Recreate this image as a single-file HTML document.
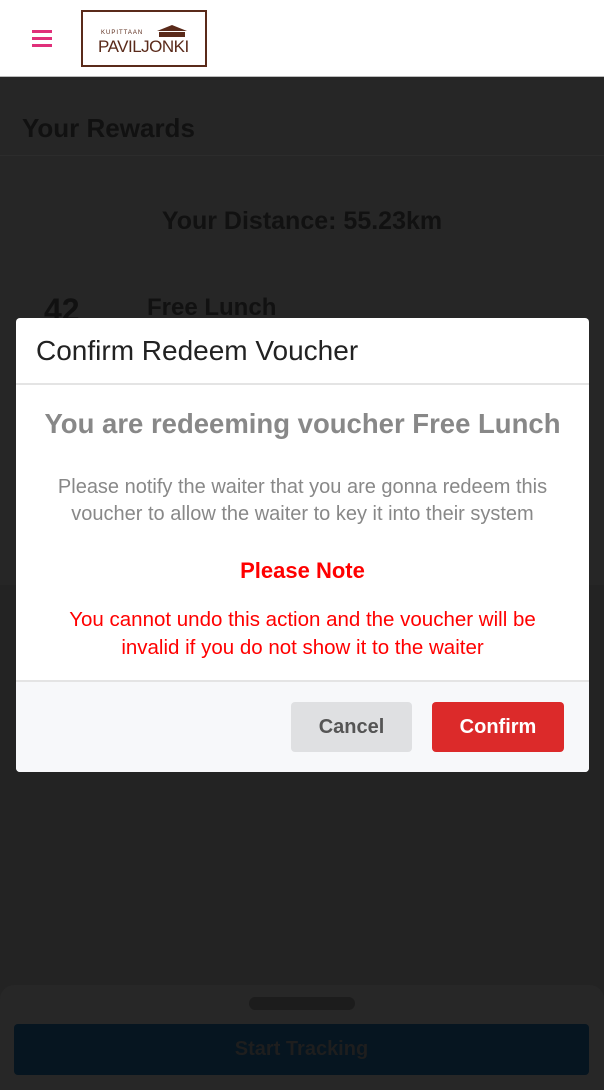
<!DOCTYPE html>
<html><head><meta charset="utf-8"><style>
body{margin:0;width:604px;height:1090px;position:relative;overflow:hidden;background:#232323;font-family:"Liberation Sans",sans-serif}
.abs{position:absolute}
</style></head><body>
<div class="abs" style="left:0;top:0;width:604px;height:76px;background:#fff;border-bottom:1px solid #bbb"></div>
<div class="abs" style="left:32px;top:30px;width:20px;height:3px;background:#e0307a;box-shadow:0 7px 0 #e0307a,0 14px 0 #e0307a"></div>
<div class="abs" style="left:81px;top:10px;width:122px;height:53px;border:2px solid #5a2a1a;background:#fff"></div>
<div class="abs" style="left:101px;top:30px;font-size:6px;letter-spacing:1px;color:#5a2a1a">KUPITTAAN</div>
<svg class="abs" style="left:155px;top:24px" width="34" height="14"><path d="M2 7 L17 1 L32 7 Z M4 8h26v5H4z" fill="#5a2a1a"/></svg>
<div class="abs" style="left:98px;top:37px;font-size:17px;color:#5a2a1a;letter-spacing:-0.5px">PAVILJONKI</div>
<div class="abs" style="left:0;top:77px;width:604px;height:508px;background:#262626"></div>
<div class="abs" style="left:0;top:155px;width:604px;height:1px;background:#2c2c2c"></div>
<div class="abs" style="left:22px;top:113px;font-size:26px;font-weight:bold;color:#111">Your Rewards</div>
<div class="abs" style="left:0;top:207px;width:604px;text-align:center;font-size:25px;font-weight:bold;color:#111">Your Distance: 55.23km</div>
<div class="abs" style="left:44px;top:292px;font-size:32px;font-weight:bold;color:#111">42</div>
<div class="abs" style="left:147px;top:294px;font-size:24px;font-weight:bold;color:#111">Free Lunch</div>
<div class="abs" style="left:0;top:985px;width:604px;height:105px;background:#272727;border-radius:14px 14px 0 0"></div>
<div class="abs" style="left:249px;top:997px;width:106px;height:13px;background:#1c1c1c;border-radius:7px"></div>
<div class="abs" style="left:14px;top:1024px;width:575px;height:51px;background:#061520;border-radius:4px;color:#1e1e1e;font-size:20px;font-weight:bold;text-align:center;line-height:51px">Start Tracking</div>

<div class="abs" style="left:16px;top:318px;width:573px;height:454px;background:#fff;border-radius:4px;overflow:hidden">
 <div class="abs" style="left:20px;top:17px;font-size:28px;color:#222">Confirm Redeem Voucher</div>
 <div class="abs" style="left:0;top:65px;width:573px;height:2px;background:#e4e4e4"></div>
 <div class="abs" style="left:0;top:90px;width:573px;text-align:center;font-size:27.5px;font-weight:bold;color:#888">You are redeeming voucher Free Lunch</div>
 <div class="abs" style="left:0;top:156px;width:573px;text-align:center;font-size:20px;line-height:27px;color:#888">Please notify the waiter that you are gonna redeem this<br>voucher to allow the waiter to key it into their system</div>
 <div class="abs" style="left:0;top:240px;width:573px;text-align:center;font-size:22px;font-weight:bold;color:#f00">Please Note</div>
 <div class="abs" style="left:0;top:288px;width:573px;text-align:center;font-size:20.5px;line-height:28px;color:#f00">You cannot undo this action and the voucher will be<br>invalid if you do not show it to the waiter</div>
 <div class="abs" style="left:0;top:362px;width:573px;height:92px;background:#f7f8fa;border-top:2px solid #e4e4e4"></div>
 <div class="abs" style="left:275px;top:384px;width:121px;height:50px;background:#dfe0e2;border-radius:4px;text-align:center;line-height:50px;font-size:20px;font-weight:bold;color:#555">Cancel</div>
 <div class="abs" style="left:416px;top:384px;width:132px;height:50px;background:#dc2a2a;border-radius:4px;text-align:center;line-height:50px;font-size:20px;font-weight:bold;color:#fff">Confirm</div>
</div>
</body></html>
